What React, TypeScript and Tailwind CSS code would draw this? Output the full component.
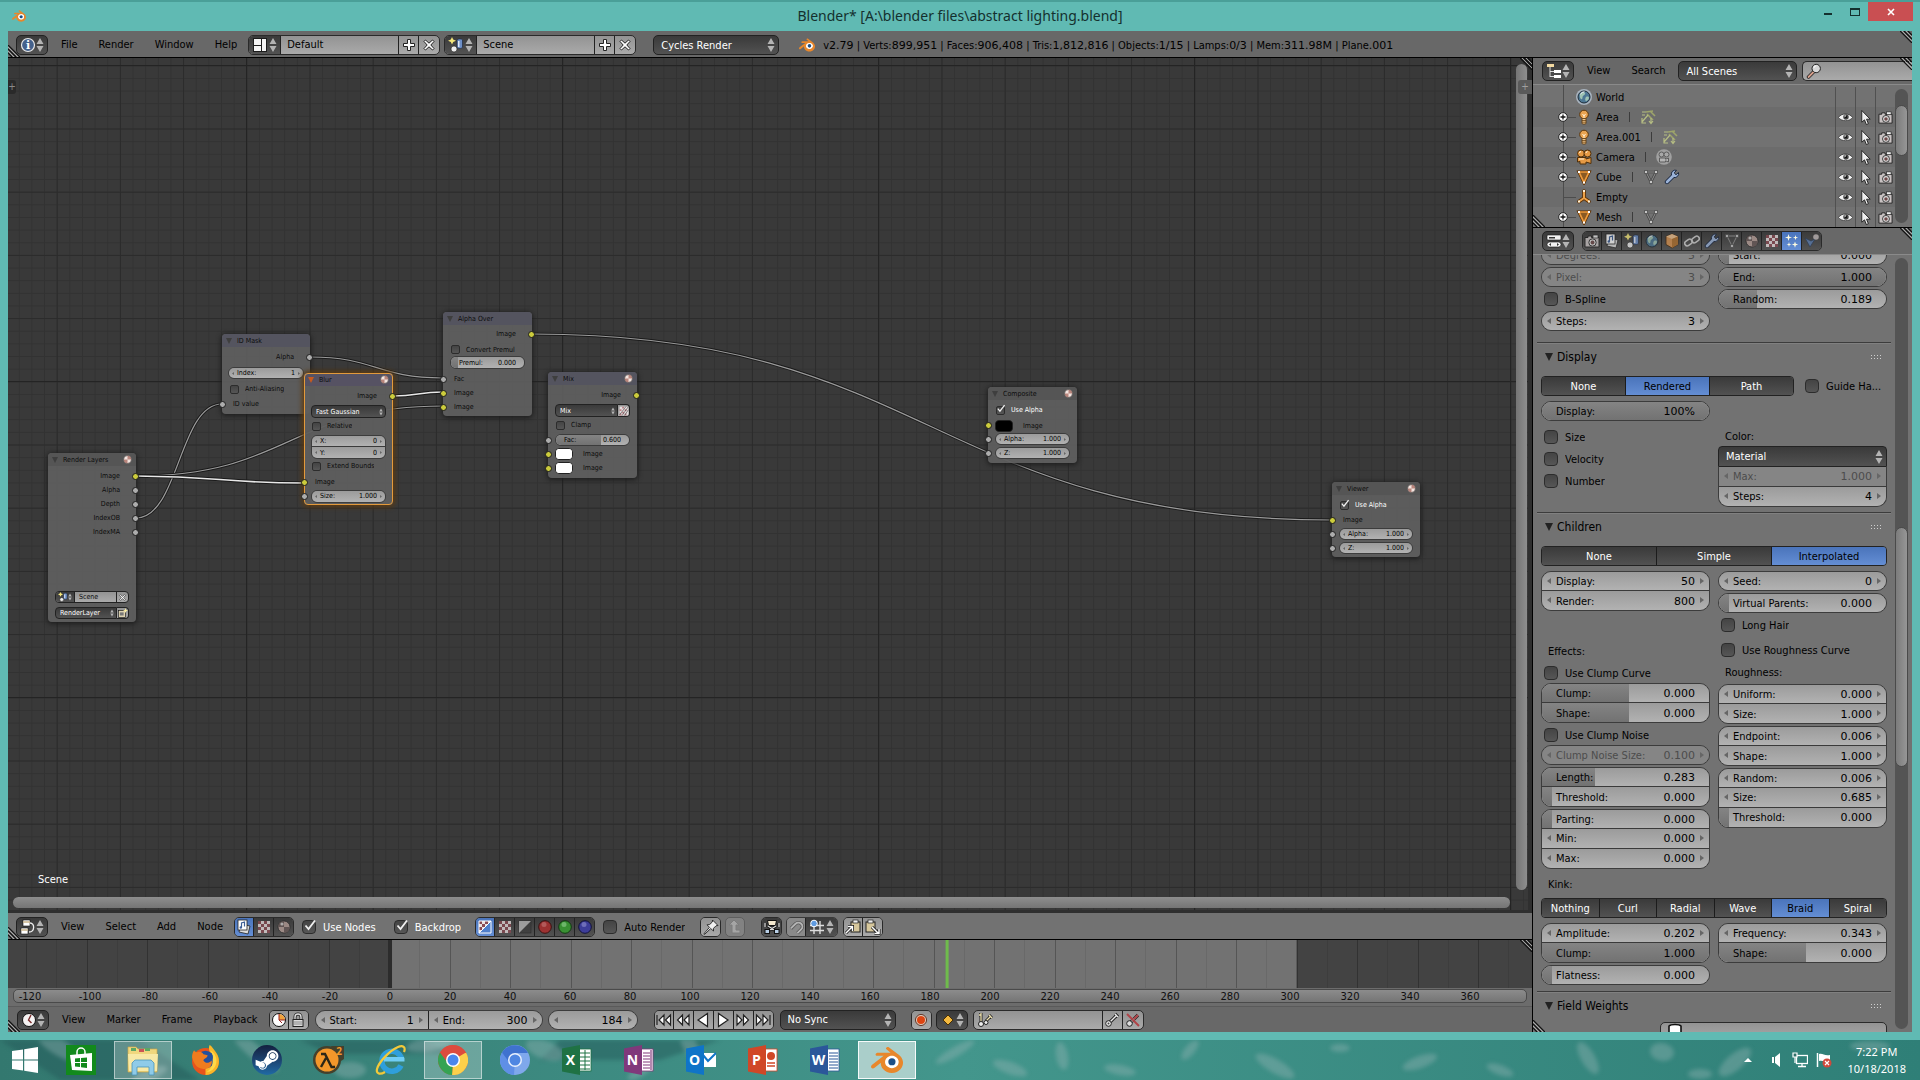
import type { ReactNode } from 'react';
import { SiBlender } from 'react-icons/si';
import { FaSteamSymbol } from 'react-icons/fa';

/* ---------- icons ---------- */

const CHECKER = (
  <>
    <rect x="2" y="2" width="12" height="12" fill="#e8e0e0" />
    <path
      d="M2 2h3v3H2zM8 2h3v3H8zM5 5h3v3H5zM11 5h3v3h-3zM2 8h3v3H2zM8 8h3v3H8zM5 11h3v3H5zM11 11h3v3h-3z"
      fill="#8b4a52"
    />
  </>
);

const ICONS: Record<string, ReactNode> = {
  info: (
    <>
      <circle cx="8" cy="8" r="6.5" fill="#44618c" stroke="#e8e8e8" strokeWidth="1.2" />
      <text x="8" y="12" fontSize="11" fontWeight="bold" textAnchor="middle" fill="#fff" fontFamily="DejaVu Serif, serif">
        i
      </text>
    </>
  ),
  layout: (
    <>
      <rect x="1" y="1" width="14" height="14" fill="#1c1c1c" />
      <path d="M2 2h7v6H2zM2 9h7v5H2zM10 2h4v12h-4z" fill="#f4f4f4" />
    </>
  ),
  scene: (
    <>
      <circle cx="6" cy="12" r="3" fill="#eee" stroke="#222" strokeWidth=".6" />
      <path d="M9 3c0-1.5 5.5-1.5 5.5 0v7c0 2-5.5 2-5.5 0z" fill="#6d8fc7" stroke="#1f2a3d" strokeWidth=".7" />
      <path d="M10 4h1.500v6H10z" fill="#dfe8f8" />
      <path d="M4 0l1.200 2.500L8 3.700 5.200 5 4 7.600 2.800 5 0 3.700l2.800-1.200z" fill="#f5e77a" />
    </>
  ),
  outliner: (
    <>
      <path d="M4 4v10M4 8.500h4M4 13.500h4" stroke="#ddd" fill="none" />
      <rect x="1" y="1" width="7" height="3" fill="#f2d9a0" />
      <path d="M8 7h7v3H8zM8 12h7v3H8z" fill="#fff" />
    </>
  ),
  props: (
    <>
      <rect x="1" y="2" width="14" height="5" rx="1" fill="#f2f2f2" stroke="#111" strokeWidth=".6" />
      <rect x="3" y="4" width="6" height="1.500" fill="#333" />
      <rect x="1" y="9" width="14" height="5" rx="2.500" fill="#f2f2f2" stroke="#111" strokeWidth=".6" />
      <path d="M5 10l-2 1.500L5 13zM11 10l2 1.500L11 13z" fill="#333" />
    </>
  ),
  nodes: (
    <>
      <rect x="3" y="1" width="7" height="6" fill="#fff" stroke="#111" strokeWidth=".6" />
      <rect x="1" y="9" width="7" height="6" fill="#fff" stroke="#111" strokeWidth=".6" />
      <path d="M3 3h7M1 11h7" stroke="#c9b48a" strokeWidth="1.500" />
      <path d="M10 4c5 0 5 9-1 9" stroke="#eee" fill="none" strokeWidth="1.300" />
    </>
  ),
  clock: (
    <>
      <circle cx="8" cy="8" r="6.500" fill="#f5f2f2" stroke="#111" />
      <path d="M10 3L7.500 8l3 3" stroke="#7a2c2c" fill="none" strokeWidth="1.400" />
    </>
  ),
  clockPie: (
    <>
      <circle cx="8" cy="8" r="6.500" fill="#fff" stroke="#111" />
      <path d="M8 8V2a6 6 0 0 1 6 6z" fill="#f0a23c" />
      <path d="M8 2v6h6M8 8l3 3" stroke="#992222" fill="none" />
    </>
  ),
  lock: (
    <>
      <path d="M5 8V5a3 3 0 0 1 6 0v3" stroke="#222" strokeWidth="3" fill="none" />
      <path d="M5 8V5a3 3 0 0 1 6 0v3" stroke="#ddd" strokeWidth="1.400" fill="none" />
      <rect x="3" y="7.500" width="10" height="7" fill="#ddd" stroke="#222" />
      <path d="M4 10h8M4 12h8" stroke="#888" />
    </>
  ),
  plus: <path d="M6.500 2.500h3v4h4v3h-4v4h-3v-4h-4v-3h4z" fill="#fff" stroke="#222" />,
  cross: (
    <path d="M3 4.500L4.500 3 8 6.200 11.500 3 13 4.500 9.800 8 13 11.500 11.500 13 8 9.800 4.500 13 3 11.500 6.200 8z" fill="#fff" stroke="#222" />
  ),
  search: (
    <>
      <path d="M7.500 9L2.500 14" stroke="#222" strokeWidth="3.400" strokeLinecap="round" />
      <path d="M7.500 9L2.500 14" stroke="#d7a08c" strokeWidth="1.800" strokeLinecap="round" />
      <circle cx="10.200" cy="5.500" r="4.200" fill="#d8d8d8" stroke="#222" />
      <path d="M7.800 5a2.500 2.500 0 0 1 2.500-2.200" stroke="#fff" fill="none" />
    </>
  ),
  world: (
    <>
      <circle cx="8" cy="8" r="6" fill="#4d7794" stroke="#1c2c38" />
      <path d="M4 5c2-2 4-2 5-1s-1 2-2 3 0 2-1 3-3-2-2-5zM10 8c2-1 3 0 3 1s-2 3-3 3-1-3 0-4z" fill="#9fc4b4" />
      <path d="M4.500 5a5 5 0 0 1 4-2.200" stroke="#fff" fill="none" />
    </>
  ),
  lamp: (
    <>
      <circle cx="8" cy="5.500" r="4.300" fill="#e9a452" stroke="#5c3508" />
      <path d="M6.500 5l1.500 2 1.500-2M8 7v3" stroke="#fff3da" fill="none" />
      <rect x="6" y="9.500" width="4" height="5.500" rx="1" fill="#f0c78c" stroke="#5c3508" strokeWidth=".8" />
      <path d="M6 11.500h4M6 13.200h4" stroke="#5c3508" strokeWidth=".7" />
    </>
  ),
  lampData: (
    <>
      <path d="M7 5l6 6M10 2l5 5M6 3l7-1" stroke="#9ea56a" strokeWidth="1.600" fill="none" />
      <path d="M8 6l-6 7M2 9v5h4M11 9v5M9 12l2 2.500 2-2.500M2 3h4M2 6h3" stroke="#b6bd83" fill="none" strokeWidth="1.200" />
    </>
  ),
  camera: (
    <>
      <circle cx="5" cy="4.500" r="3.500" fill="#e69a45" stroke="#51300a" />
      <circle cx="11.500" cy="4.500" r="3.500" fill="#e69a45" stroke="#51300a" />
      <path d="M1.500 8.500h8.500v1.500l5-1.500v6L10 13v2H4v-2.500L1.500 13z" fill="#e69a45" stroke="#51300a" />
      <path d="M3.500 4A1.500 1.500 0 0 1 5 2.500M10 4a1.500 1.500 0 0 1 1.500-1.500M3 10h5" stroke="#fff3da" fill="none" />
    </>
  ),
  cameraData: (
    <>
      <circle cx="8" cy="8" r="7.800" fill="#a0a0a0" />
      <circle cx="5.500" cy="5.500" r="2.500" fill="#a8a8a8" stroke="#5c5c5c" />
      <circle cx="10.500" cy="5.500" r="2.500" fill="#a8a8a8" stroke="#5c5c5c" />
      <path d="M3.500 9h6v1.200l3-1.200v4l-3-1.200V13h-6z" fill="#b4b4b4" stroke="#5c5c5c" />
    </>
  ),
  mesh: (
    <>
      <path d="M3 3h10L8 13.500z" fill="none" stroke="#5c2f00" strokeWidth="3.200" />
      <path d="M3 3h10L8 13.500z" fill="#8a5a24" stroke="#ee9b3c" strokeWidth="1.700" />
      <path d="M2 2h2v2H2zM12 2h2v2h-2zM7 12.500h2v2H7z" fill="#fff" />
    </>
  ),
  meshData: (
    <>
      <path d="M3 3h10L8 13z" fill="none" stroke="#484848" strokeWidth="2.600" />
      <path d="M3 3h10L8 13z" fill="none" stroke="#909090" />
      <path d="M1.500 1.500h3v3h-3zM11.500 1.500h3v3h-3zM6.500 11.500h3v3h-3z" fill="#c5c5c5" stroke="#444" strokeWidth=".7" />
    </>
  ),
  empty: (
    <>
      <path d="M8 2v7L3 12.500M8 9l5 3.500" fill="none" stroke="#5c2f00" strokeWidth="3.600" strokeLinecap="round" />
      <path d="M8 2v7L3 12.500M8 9l5 3.500" fill="none" stroke="#eda24a" strokeWidth="2" strokeLinecap="round" />
      <path d="M7 1h2v2H7zM2 11.500h2v2H2zM12 11.500h2v2h-2z" fill="#fff2d8" />
    </>
  ),
  wrench: (
    <>
      <path d="M3 13l6-6" stroke="#1a2740" strokeWidth="4.400" strokeLinecap="round" />
      <path d="M14.500 3.500l-2.500 2.200-1.800-1.800L12.500 1.300a4 4 0 0 0-5 5l2.200 2.200a4 4 0 0 0 4.800-5z" fill="#9bb3d8" stroke="#1a2740" />
      <path d="M3 13l6.500-6.500" stroke="#9bb3d8" strokeWidth="2.600" strokeLinecap="round" />
    </>
  ),
  eye: (
    <>
      <path d="M.5 8c3-5 12-5 15 0-3 4.500-12 4.500-15 0z" fill="#f2f2f2" stroke="#333" strokeWidth=".8" />
      <circle cx="8.500" cy="7.500" r="2.900" fill="#444" />
      <circle cx="8.500" cy="7.500" r="1.200" fill="#111" />
      <circle cx="7.600" cy="6.500" r=".8" fill="#fff" />
    </>
  ),
  cursor: <path d="M4 .5v12.500l2.900-2.500 2 5 2.200-.9-2-4.800H13z" fill="#eee" stroke="#222" />,
  still: (
    <>
      <path d="M1 4.500h3V3h3.500v1.500H15V14H1z" fill="#c9c3c3" stroke="#222" />
      <rect x="9" y="2" width="5" height="3" fill="#eee" stroke="#222" strokeWidth=".7" />
      <circle cx="8.500" cy="9.500" r="3.700" fill="#ddd" stroke="#333" />
      <circle cx="8.500" cy="9.500" r="1.900" fill="#6e4a4a" />
    </>
  ),
  layers: (
    <>
      <path d="M5 5l9 2-2 8-9-2z" fill="#ddd" stroke="#222" strokeWidth=".8" />
      <rect x="2" y="1" width="9" height="10" fill="#fff" stroke="#222" strokeWidth=".8" />
      <path d="M5.500 8.500V4l3-1v4.500" stroke="#3c5e95" fill="none" strokeWidth="1.200" />
      <circle cx="4.800" cy="8.500" r="1.200" fill="#3c5e95" />
    </>
  ),
  cube: (
    <>
      <path d="M8 1l6 2.500v8L8 15l-6-3.500v-8z" fill="#d99350" stroke="#3a2208" strokeWidth=".8" />
      <path d="M8 1l6 2.500L8 6 2 3.500z" fill="#f3c491" />
      <path d="M8 6v9l6-3.500v-8z" fill="#b0702d" />
    </>
  ),
  chain: (
    <g fill="none" stroke="#d0d0d0" strokeWidth="1.600">
      <rect x="0.500" y="7" width="8" height="5" rx="2.500" transform="rotate(-35 4.500 9.500)" />
      <rect x="7.500" y="4" width="8" height="5" rx="2.500" transform="rotate(-35 11.500 6.500)" />
    </g>
  ),
  material: (
    <>
      <circle cx="8" cy="8" r="6" fill="#b8a09a" stroke="#222" strokeWidth=".8" />
      <path d="M8 8V2a6 6 0 0 0-6 6zM8 8v6a6 6 0 0 0 6-6z" fill="#6a5a58" />
      <circle cx="6" cy="5" r="1.600" fill="#fff" opacity=".7" />
    </>
  ),
  texture: CHECKER,
  particles: (
    <path
      d="M4.500 1l.8 2.700 2.700.8-2.700.8L4.500 8l-.8-2.700L1 4.500l2.700-.8zM11.500 2l.6 2 2 .6-2 .6-.6 2-.6-2-2-.6 2-.6zM5 9l.6 1.900 1.900.6-1.900.6L5 14l-.6-1.900-1.900-.6 1.900-.6zM11 8.500l.8 2.300 2.400.7-2.400.8-.8 2.400-.8-2.400-2.400-.8 2.400-.7z"
      fill="#fdfbe0"
    />
  ),
  physics: (
    <>
      <path d="M1 5l5 9 5-8-4 2z" fill="#5b7cae" stroke="#263a58" strokeWidth=".7" />
      <circle cx="12" cy="4" r="2.800" fill="#c0b8b8" />
    </>
  ),
  colorAlpha: (
    <>
      {CHECKER}
      <path d="M14 2v12H2z" fill="#4f7fcc" />
      <path d="M2 2h12v12H2zM2 14L14 2" fill="none" stroke="#fff" />
    </>
  ),
  alpha: (
    <>
      <rect x="2" y="2" width="12" height="12" fill="#3c3c3c" stroke="#222" strokeWidth=".6" />
      <path d="M2 2h12L2 14z" fill="#bbb" />
    </>
  ),
  red: (
    <>
      <circle cx="8" cy="8" r="6.300" fill="#b82a2a" stroke="#300" />
      <circle cx="7" cy="5.500" r="2.500" fill="#e88" opacity=".6" />
    </>
  ),
  green: (
    <>
      <circle cx="8" cy="8" r="6.300" fill="#35a82c" stroke="#030" />
      <circle cx="7" cy="5.500" r="2.500" fill="#afa" opacity=".6" />
    </>
  ),
  blue: (
    <>
      <circle cx="8" cy="8" r="6.300" fill="#3a3ab4" stroke="#003" />
      <circle cx="7" cy="5.500" r="2.500" fill="#aaf" opacity=".6" />
    </>
  ),
  pin: (
    <path d="M9.500 1l5.500 5.500-2 .3-2.500 2.500v2.700L7.700 9.500 2 15l-1 .3.300-1L6.500 8.300 4 5.800l2.700-.3L9.300 3z" fill="#f0f0f0" stroke="#222" strokeWidth=".9" />
  ),
  up: <path d="M7 1l5 5H9v5h4v3H5V6H2z" fill="#a5a5a5" stroke="#7c7c7c" />,
  backdrop: (
    <>
      <path d="M3.500 1.500h9l-1 5h-7z" fill="#f3e8cf" stroke="#111" />
      <path d="M1 4v4M15 4v4M4 7l8 5M12 7l-8 5" stroke="#111" strokeWidth="3" />
      <path d="M1 4v4M15 4v4M4 7l8 5M12 7l-8 5" stroke="#ddd" strokeWidth="1.300" />
      <rect x="1" y="10.500" width="4.500" height="4" fill="#b9d0e8" stroke="#111" />
      <rect x="10.500" y="10.500" width="4.500" height="4" fill="#b9d0e8" stroke="#111" />
    </>
  ),
  magnet: (
    <>
      <path d="M2 9l5-5a4 4 0 0 1 6 6l-4 4" stroke="#555" strokeWidth="3.600" fill="none" />
      <path d="M2 9l5-5a4 4 0 0 1 6 6l-4 4" stroke="#b4b4b4" strokeWidth="2" fill="none" />
    </>
  ),
  grid: (
    <>
      <path d="M5 6v9M11 2v13M1 6.500h14M1 11.500h14" stroke="#ddd" strokeWidth="1.400" />
      <circle cx="5" cy="4.500" r="3.300" fill="#5f9be0" stroke="#fff" />
    </>
  ),
  copy: (
    <>
      <rect x="6" y="3" width="9" height="10" fill="#d6c79c" stroke="#222" />
      <rect x="8" y="1" width="5" height="3" fill="#eee" stroke="#222" strokeWidth=".7" />
      <path d="M1 14l6-6M3 7.500h4.500V12" stroke="#111" strokeWidth="3" fill="none" />
      <path d="M1 14l6-6M3 7.500h4.500V12" stroke="#fff" strokeWidth="1.500" fill="none" />
    </>
  ),
  paste: (
    <>
      <rect x="1" y="3" width="9" height="10" fill="#d6c79c" stroke="#222" />
      <rect x="3" y="1" width="5" height="3" fill="#eee" stroke="#222" strokeWidth=".7" />
      <path d="M7 8l6.500 6.500M14 10v4.500H9.500" stroke="#111" strokeWidth="3" fill="none" />
      <path d="M7 8l6.500 6.500M14 10v4.500H9.500" stroke="#fff" strokeWidth="1.500" fill="none" />
    </>
  ),
  first: <path d="M1 3v10M8 3L3 8l5 5zM14.500 3l-5 5 5 5z" fill="#fff" stroke="#222" strokeWidth="1.200" />,
  prev: <path d="M7.500 3l-5 5 5 5zM14 3L9 8l5 5z" fill="#fff" stroke="#222" strokeWidth="1.200" />,
  back: <path d="M12.500 1.500v13L3 8z" fill="#fff" stroke="#222" strokeWidth="1.200" />,
  play: <path d="M3.500 1.500v13L13 8z" fill="#fff" stroke="#222" strokeWidth="1.200" />,
  next: <path d="M2 3l5 5-5 5zM8.500 3l5 5-5 5z" fill="#fff" stroke="#222" strokeWidth="1.200" />,
  last: <path d="M15 3v10M1.500 3l5 5-5 5zM8 3l5 5-5 5z" fill="#fff" stroke="#222" strokeWidth="1.200" />,
  record: (
    <>
      <circle cx="8" cy="8" r="5.500" fill="#e9d5c5" stroke="#5e3020" />
      <circle cx="8" cy="8" r="4" fill="#dd4411" />
    </>
  ),
  diamond: <path d="M8 3l5 5-5 5-5-5z" fill="#f3b93f" stroke="#4a2f00" />,
  keying: (
    <>
      <path d="M4 1v9M2 3h2M9 9l5-5M12 3l3 3" stroke="#222" strokeWidth="3" />
      <path d="M4 1v9M2 3h2M9 9l5-5M12 3l3 3" stroke="#f0e3b0" strokeWidth="1.300" />
      <circle cx="4" cy="12" r="2.500" fill="#eee" stroke="#222" />
      <circle cx="9" cy="10.500" r="2" fill="#eee" stroke="#222" />
    </>
  ),
  key: (
    <>
      <path d="M5 11l8-8M11 2l3 3" stroke="#222" strokeWidth="3.200" />
      <path d="M5 11l8-8M11 2l3 3" stroke="#eee" strokeWidth="1.400" />
      <circle cx="4.500" cy="11.500" r="2.800" fill="#eee" stroke="#222" />
      <circle cx="4.500" cy="11.500" r="1" fill="#444" />
    </>
  ),
  keyDel: (
    <>
      <path d="M5 11l8-8" stroke="#222" strokeWidth="3.200" />
      <path d="M5 11l8-8" stroke="#ddd" strokeWidth="1.400" />
      <circle cx="4.500" cy="11.500" r="2.800" fill="#ddd" stroke="#222" />
      <path d="M2 2l12 12M13 3L9 7" stroke="#b04448" strokeWidth="2" />
    </>
  ),
  newLayer: (
    <>
      <rect x="1" y="4" width="11" height="11" fill="#ddd2b0" stroke="#111" />
      <path d="M3 7h6v5H3z" fill="#777" />
      <path d="M12 0l1 3 3 1-3 1-1 3-1-3-3-1 3-1z" fill="#fff3a0" />
    </>
  ),
  useAlpha: (
    <>
      <rect x="1" y="1" width="14" height="14" fill="#e6dede" />
      <path d="M1 5h3v3H1zM5 1h3v3H5zM9 5h3v3H9zM5 9h3v3H5zM9 12h3v3H9zM1 12h3v3H1z" fill="#b98288" />
      <path d="M15 1L5 15M15 6L9 15M11 1L1 14" stroke="#444" />
    </>
  ),
  ball: (
    <>
      <circle cx="8" cy="8" r="7" fill="#f3e4df" stroke="#333" />
      <path d="M8 8V1.500A6.500 6.500 0 0 1 14.500 8zM8 8v6.500A6.500 6.500 0 0 1 1.500 8z" fill="#a5675c" opacity=".75" />
    </>
  ),
  box: <path d="M2 3c2-2 10-2 12 0v12H2z" fill="#fff" stroke="#111" strokeWidth="1.600" />,
};

function Icon({ name, className = 'size-4' }: { name: string; className?: string }) {
  return (
    <svg viewBox="0 0 16 16" className={`${className} shrink-0`} aria-hidden="true">
      {ICONS[name]}
    </svg>
  );
}

function BlenderLogo({ className }: { className: string }) {
  return (
    <span className={`relative inline-block shrink-0 ${className}`}>
      <svg viewBox="0 0 24 24" className="absolute inset-0 size-full" aria-hidden="true">
        <circle cx="15.600" cy="13.300" r="5.500" fill="#fff" />
      </svg>
      <SiBlender className="absolute inset-0 size-full text-[#e8872b]" />
      <svg viewBox="0 0 24 24" className="absolute inset-0 size-full" aria-hidden="true">
        <ellipse cx="15.700" cy="13.300" rx="4.600" ry="4.100" fill="#fff" />
        <circle cx="15.700" cy="13.300" r="2.700" fill="#1d4f86" />
      </svg>
    </span>
  );
}

function UpDown({ small = false }: { small?: boolean }) {
  return (
    <svg viewBox="0 0 8 14" className={small ? 'h-2 w-1 shrink-0' : 'h-3.5 w-2 shrink-0'} aria-hidden="true">
      <path d="M4 0l3.500 6h-7zM4 14l3.500-6h-7z" fill="#b4b4b4" />
    </svg>
  );
}

/* Diagonal grip in the corner of every editor */
function Grip({ className }: { className: string }) {
  return (
    <svg viewBox="0 0 12 12" className={`pointer-events-none absolute size-3 ${className}`} aria-hidden="true">
      <path d="M0 0l12 12M4 0l8 8M8 0l4 4" stroke="#111" strokeWidth="1.200" />
      <path d="M2 0l10 10M6 0l6 6" stroke="#bbb" strokeWidth=".8" />
    </svg>
  );
}

function GripLow() {
  return (
    <svg viewBox="0 0 12 12" className="pointer-events-none absolute bottom-0 left-0 size-3" aria-hidden="true">
      <path d="M0 0l12 12M0 4l8 8M0 8l4 4" stroke="#111" strokeWidth="1.200" />
      <path d="M0 2l10 10M0 6l6 6" stroke="#bbb" strokeWidth=".8" />
    </svg>
  );
}

/* ---------- shared controls ---------- */

const DARK = 'bg-linear-to-b from-[#3a3a3a] to-[#525252]';
const LIGHT = 'bg-linear-to-b from-[#939393] to-[#aaaaaa]';
const CONDENSED = "font-['DejaVu_Sans_Condensed','DejaVu_Sans',sans-serif]";
const WIDE = "font-['DejaVu_Sans',sans-serif]";

function EditorType({ icon, label }: { icon: string; label: string }) {
  return (
    <button
      type="button"
      aria-label={label}
      className={`flex h-5 w-8 items-center justify-between rounded-[5px] border border-[#222] px-[3px] ${DARK}`}
    >
      <Icon name={icon} />
      <UpDown />
    </button>
  );
}

function Menus({ items }: { items: string[] }) {
  return (
    <nav className="flex gap-px pr-px pl-[3px]">
      {items.map((item) => (
        <button key={item} type="button" className="px-[10px]">
          {item}
        </button>
      ))}
    </nav>
  );
}

function IdBlock({ icon, value, label }: { icon: string; value: string; label: string }) {
  return (
    <div className={`flex h-5 w-48 divide-x divide-[#222] overflow-hidden rounded-[5px] border border-[#2a2a2a] ${LIGHT}`}>
      <button type="button" aria-label={`Browse ${label}`} className={`flex w-8 items-center justify-between px-[3px] ${DARK}`}>
        <Icon name={icon} />
        <UpDown />
      </button>
      <input aria-label={label} defaultValue={value} className="w-0 flex-1 px-[6px] outline-none" />
      <button type="button" aria-label={`Add ${label}`} className="flex w-5 items-center justify-center">
        <Icon name="plus" />
      </button>
      <button type="button" aria-label={`Delete ${label}`} className="flex w-5 items-center justify-center">
        <Icon name="cross" />
      </button>
    </div>
  );
}

function Dropdown({ label, value, className, small = false }: { label: string; value: string; className: string; small?: boolean }) {
  return (
    <div className={`relative flex items-center border border-[#222] text-white ${DARK} ${className}`}>
      <select aria-label={label} className={`size-full appearance-none outline-none ${small ? 'pl-[4px]' : 'pt-px pl-[7px]'}`}>
        <option>{value}</option>
      </select>
      <span className={`pointer-events-none absolute ${small ? 'right-[2px]' : 'right-[3px]'}`}>
        <UpDown small={small} />
      </span>
    </div>
  );
}

function Check({ label, checked = false, small = false, light = false }: { label: string; checked?: boolean; small?: boolean; light?: boolean }) {
  return (
    <label className={`relative flex min-w-0 items-center ${small ? 'gap-[6px] pl-px' : 'h-5 gap-[7px] pl-[3px]'} ${light ? 'text-white' : ''}`}>
      <input
        type="checkbox"
        defaultChecked={checked}
        className={`peer shrink-0 appearance-none border border-[#2c2c2c] bg-linear-to-b from-[#444] to-[#565656] ${
          small ? 'size-[9px] rounded-[2px]' : 'size-[14px] rounded-[4px]'
        }`}
      />
      <svg
        viewBox="0 0 14 14"
        className={`pointer-events-none absolute hidden -translate-y-px peer-checked:block ${small ? 'left-[1px] size-[10px]' : 'left-[4px] size-[14px]'}`}
        aria-hidden="true"
      >
        <path d="M2.500 6.500l3 3.500L12 1.500" fill="none" stroke="#f0f0f0" strokeWidth="1.800" />
      </svg>
      <span className={`truncate ${small ? '' : 'pt-px'}`}>{label}</span>
    </label>
  );
}

type FieldProps = {
  label?: string;
  value: string;
  fill?: number;
  dim?: boolean;
  small?: boolean;
};

/* A number button; with `fill` it is drawn as a slider */
function Field({ label = '', value, fill, dim = false, small = false }: FieldProps) {
  const slider = fill !== undefined;
  return (
    <label
      className={`relative flex min-h-0 w-full items-center overflow-hidden ${small ? 'px-[8px]' : 'px-[14px] pt-[2px]'} ${
        dim ? 'bg-[#858585] text-[#4c4c4c]' : 'bg-linear-to-b from-[#9b9b9b] to-[#b2b2b2] text-black'
      }`}
    >
      {slider && (
        <span className="absolute inset-y-0 left-0 bg-linear-to-b from-[#848484] to-[#727272]" style={{ width: `${fill * 100}%` }} />
      )}
      {!slider && (
        <>
          <svg viewBox="0 0 4 6" className={`absolute ${small ? 'left-[3px] h-[3px] w-[2px]' : 'top-[6px] left-[5px] h-1.5 w-1'}`} aria-hidden="true">
            <path d="M4 0v6L0 3z" fill="#666" />
          </svg>
          <svg viewBox="0 0 4 6" className={`absolute ${small ? 'right-[3px] h-[3px] w-[2px]' : 'top-[6px] right-[5px] h-1.5 w-1'}`} aria-hidden="true">
            <path d="M0 0v6l4-3z" fill="#666" />
          </svg>
        </>
      )}
      <span className="relative whitespace-nowrap">{label}</span>
      <input
        aria-label={label || 'Current frame'}
        defaultValue={value}
        disabled={dim}
        className={`relative w-0 flex-1 text-right outline-none ${small ? '' : WIDE}`}
      />
    </label>
  );
}

function FieldGroup({ rows, className }: { rows: FieldProps[]; className: string }) {
  return (
    <div className={`grid auto-rows-fr divide-y divide-[#3a3a3a] overflow-hidden border border-[#3c3c3c] ${className}`}>
      {rows.map((row, i) => (
        <Field key={i} {...row} />
      ))}
    </div>
  );
}

function Choice({ items, active, className }: { items: string[]; active: string; className: string }) {
  return (
    <div className={`flex h-5 divide-x divide-[#1c1c1c] overflow-hidden rounded-[4px] border border-[#222] ${className}`}>
      {items.map((item) => (
        <button
          key={item}
          type="button"
          aria-pressed={item === active}
          className={`w-0 flex-1 pt-[2px] ${item === active ? 'bg-linear-to-b from-[#4a74bb] to-[#648ed4] text-black' : `text-white ${DARK}`}`}
        >
          {item}
        </button>
      ))}
    </div>
  );
}

function IconGroup({ icons, active, tone = 'dark' }: { icons: string[]; active?: string; tone?: 'dark' | 'light' }) {
  return (
    <div className="flex h-5 shrink-0 divide-x divide-[#222] overflow-hidden rounded-[5px] border border-[#2a2a2a]">
      {icons.map((icon) => (
        <button
          key={icon}
          type="button"
          aria-label={icon}
          className={`flex w-5 items-center justify-center first:w-[19px] last:w-[19px] ${
            icon === active ? 'bg-linear-to-b from-[#4a74bb] to-[#648ed4]' : tone === 'dark' ? DARK : LIGHT
          }`}
        >
          <Icon name={icon} className={active && icon !== active ? 'size-4 opacity-75' : 'size-4'} />
        </button>
      ))}
    </div>
  );
}

/* ---------- top ---------- */

function TitleBar() {
  return (
    <header className="grid h-[31px] grid-cols-[1fr_auto_1fr] border-t-2 border-[#4a9f98]">
      <div className="flex items-center pb-px pl-3">
        <BlenderLogo className="size-3.5" />
      </div>
      <h1 className="font-['Noto_Sans','Open_Sans',sans-serif] text-[14px] leading-[27px] text-[#14302e]">
        Blender* [A:\blender files\abstract lighting.blend]
      </h1>
      <div className="flex justify-end pr-[7px]">
        <button type="button" aria-label="Minimize" className="flex h-[19px] w-[27px] items-center justify-center">
          <span className="mt-1 h-[2px] w-2 bg-[#14302e]" />
        </button>
        <button type="button" aria-label="Maximize" className="flex h-[19px] w-[27px] items-center justify-center">
          <span className="h-2 w-2.5 border border-t-2 border-[#14302e]" />
        </button>
        <button type="button" aria-label="Close" className="flex h-[19px] w-[45px] items-center justify-center bg-[#c94f52]">
          <svg viewBox="0 0 8 8" className="size-2" aria-hidden="true">
            <path d="M1 1l6 6M7 1L1 7" stroke="#fff" strokeWidth="1.600" />
          </svg>
        </button>
      </div>
    </header>
  );
}

const STATS = [
  ['v', '2.79'],
  ['Verts:', '899,951'],
  ['Faces:', '906,408'],
  ['Tris:', '1,812,816'],
  ['Objects:', '1/15'],
  ['Lamps:', '0/3'],
  ['Mem:', '311.98M'],
  ['Plane', '.001'],
];

function InfoHeader() {
  return (
    <div className="relative flex h-[27px] items-center border-b border-black bg-[#686868] pt-[2px] pl-2">
      <EditorType icon="info" label="Editor type: Info" />
      <Menus items={['File', 'Render', 'Window', 'Help']} />
      <IdBlock icon="layout" value="Default" label="screen layout" />
      <div className="ml-1">
        <IdBlock icon="scene" value="Scene" label="scene" />
      </div>
      <Dropdown label="Render engine" value="Cycles Render" className="ml-[17px] h-5 w-[126px] rounded-[5px]" />
      <BlenderLogo className="ml-5 size-4" />
      <p className="ml-[8px] pt-px whitespace-nowrap">
        {STATS.map(([name, value], i) => (
          <span key={name}>
            {i > 0 && ' | '}
            {name}
            <span className={WIDE}>{value}</span>
          </span>
        ))}
      </p>
      <Grip className="top-0 right-0" />
      <GripLow />
    </div>
  );
}

/* ---------- node editor ---------- */

type SocketColor = 'yellow' | 'grey';

function Row({
  children,
  left,
  right,
  className = 'h-[14px]',
}: {
  children: ReactNode;
  left?: SocketColor;
  right?: SocketColor;
  className?: string;
}) {
  const dot = 'absolute size-[7px] rounded-full border border-[#1c1c1c]';
  return (
    <div className={`relative flex shrink-0 items-center px-[7px] ${className}`}>
      {left && <span className={`${dot} -left-[3px] ${left === 'yellow' ? 'bg-[#cccc3c]' : 'bg-[#adadad]'}`} />}
      {children}
      {right && <span className={`${dot} -right-[3px] ${right === 'yellow' ? 'bg-[#cccc3c]' : 'bg-[#adadad]'}`} />}
    </div>
  );
}

function Node({
  title,
  className,
  header = 'bg-[#555]',
  selected = false,
  preview = true,
  children,
}: {
  title: string;
  className: string;
  header?: string;
  selected?: boolean;
  preview?: boolean;
  children: ReactNode;
}) {
  return (
    <section
      className={`absolute flex flex-col rounded-[4px] bg-[#5e5e5e]/95 text-[7px] leading-[10px] text-[#0c0c0c] ${
        selected ? 'shadow-[0_0_5px_2px_#5c3a10] outline -outline-offset-1 outline-[#e39a3c]' : 'shadow-[0_1px_5px_1px_#1e1e1e]'
      } ${className}`}
    >
      <h2 className={`flex h-[13px] shrink-0 items-center gap-[5px] rounded-t-[4px] px-[4px] ${header}`}>
        <svg viewBox="0 0 6 6" className="size-[6px]" aria-hidden="true">
          <path d="M0 0h6L3 6z" fill={selected ? '#c85a1e' : '#3e3e3e'} />
        </svg>
        <span className="flex-1 whitespace-nowrap">{title}</span>
        {preview && <Icon name="ball" className="size-[9px]" />}
      </h2>
      {children}
    </section>
  );
}

function Output({ label, color = 'grey', className }: { label: string; color?: SocketColor; className?: string }) {
  return (
    <Row right={color} className={className}>
      <span className="flex-1 pr-[9px] text-right">{label}</span>
    </Row>
  );
}

function Input({ label, color = 'grey', className }: { label: string; color?: SocketColor; className?: string }) {
  return (
    <Row left={color} className={className}>
      <span className="pl-[4px]">{label}</span>
    </Row>
  );
}

function Swatch({ label, black = false, className }: { label: string; black?: boolean; className?: string }) {
  return (
    <Row left="yellow" className={className}>
      <input
        type="color"
        aria-label={`${label} color`}
        defaultValue={black ? '#000000' : '#ffffff'}
        className={`h-[12px] w-[18px] appearance-none rounded-[4px] border border-[#222] p-0 ${black ? 'bg-black' : 'bg-white'} [&::-webkit-color-swatch-wrapper]:p-0 [&::-webkit-color-swatch]:rounded-[3px] [&::-webkit-color-swatch]:border-0`}
      />
      <span className="pl-[10px]">{label}</span>
    </Row>
  );
}

function NodeCanvas() {
  const links = [
    'M128 460C171 460 171 346 214 346',
    'M128 418C282 418 282 348 435 348',
    'M302 299C368 299 368 320 435 320',
    'M524 276C924 276 924 462 1324 462',
  ];
  const activeLinks = ['M128 418C212 418 212 425 296 425', 'M385 338C410 338 410 334 435 334'];

  return (
    <div className="relative min-h-0 flex-1 overflow-hidden bg-[#393939]">
      <svg className="absolute inset-0 size-full" aria-hidden="true">
        <defs>
          <pattern id="minor" width="12.640" height="12.640" x="238.300" y="7.300" patternUnits="userSpaceOnUse">
            <path d="M0 .5h12.640M.5 0v12.640" stroke="#323232" />
          </pattern>
          <pattern id="mid" width="63.200" height="63.200" x="238.300" y="7.300" patternUnits="userSpaceOnUse">
            <path d="M0 .5h63.200M.5 0v63.200" stroke="#2b2b2b" />
          </pattern>
          <pattern id="major" width="316" height="316" x="238" y="7" patternUnits="userSpaceOnUse">
            <path d="M0 .5h316M.5 0v316" stroke="#242424" />
          </pattern>
        </defs>
        <rect width="100%" height="100%" fill="url(#minor)" />
        <rect width="100%" height="100%" fill="url(#mid)" />
        <rect width="100%" height="100%" fill="url(#major)" />
        <g fill="none">
          {links.map((d) => (
            <g key={d}>
              <path d={d} stroke="#1a1a1a" strokeWidth="3" />
              <path d={d} stroke="#9a9a9a" strokeWidth="1.200" />
            </g>
          ))}
          {activeLinks.map((d) => (
            <g key={d}>
              <path d={d} stroke="#1a1a1a" strokeWidth="3.500" />
              <path d={d} stroke="#e8e8e8" strokeWidth="1.600" />
            </g>
          ))}
        </g>
      </svg>

      <Node title="Render Layers" className="top-[395px] left-[40px] h-[169px] w-[88px]">
        <div className="pt-[3px]">
          <Output label="Image" color="yellow" />
          <Output label="Alpha" />
          <Output label="Depth" />
          <Output label="IndexOB" />
          <Output label="IndexMA" />
        </div>
        <div className="mt-auto flex flex-col gap-[4px] px-[7px] pb-[3px]">
          <div className={`flex h-[12px] divide-x divide-[#222] overflow-hidden rounded-[4px] border border-[#222] ${LIGHT}`}>
            <button type="button" aria-label="Browse scene" className={`flex w-[19px] items-center justify-between px-[2px] ${DARK}`}>
              <Icon name="scene" className="size-[10px]" />
              <UpDown small />
            </button>
            <input aria-label="Scene" defaultValue="Scene" className="w-0 flex-1 px-[4px] outline-none" />
            <button type="button" aria-label="Unlink scene" className="flex w-[11px] items-center justify-center">
              <Icon name="cross" className="size-[9px]" />
            </button>
          </div>
          <div className="flex h-[12px]">
            <Dropdown small label="Render layer" value="RenderLayer" className="flex-1 rounded-l-[4px]" />
            <button
              type="button"
              aria-label="Render this layer"
              className={`flex w-[12px] items-center justify-center rounded-r-[4px] border border-l-0 border-[#222] ${LIGHT}`}
            >
              <Icon name="newLayer" className="size-[10px]" />
            </button>
          </div>
        </div>
      </Node>

      <Node title="ID Mask" preview={false} header="bg-[#54545f]" className="top-[276px] left-[214px] w-[88px] pb-[3px]">
        <div className="pt-[3px]">
          <Output label="Alpha" />
        </div>
        <FieldGroup className="mx-[6px] mt-[3px] h-[12px] rounded-[6px]" rows={[{ label: 'Index:', value: '1', small: true }]} />
        <Row className="mt-[3px] h-[14px]">
          <Check small label="Anti-Aliasing" />
        </Row>
        <Input label="ID value" className="mt-px h-[14px]" />
      </Node>

      <Node title="Blur" selected header="bg-[#565263]" className="top-[315px] left-[296px] w-[89px] pb-[2px]">
        <div className="pt-[3px]">
          <Output label="Image" color="yellow" />
        </div>
        <Dropdown small label="Filter type" value="Fast Gaussian" className="mx-[7px] mt-[2px] h-[13px] rounded-[4px]" />
        <Row className="mt-px h-[14px]">
          <Check small label="Relative" />
        </Row>
        <FieldGroup
          className="mx-[7px] mt-[2px] h-[24px] rounded-[6px]"
          rows={[
            { label: 'X:', value: '0', small: true },
            { label: 'Y:', value: '0', small: true },
          ]}
        />
        <Row>
          <Check small label="Extend Bounds" />
        </Row>
        <Input label="Image" color="yellow" className="mt-[2px] h-[14px]" />
        <Row left="grey">
          <FieldGroup className="h-[13px] flex-1 rounded-[6px]" rows={[{ label: 'Size:', value: '1.000', small: true }]} />
        </Row>
      </Node>

      <Node title="Alpha Over" preview={false} header="bg-[#54545f]" className="top-[254px] left-[435px] w-[89px] pb-[2px]">
        <Output label="Image" color="yellow" className="mt-[2px] h-[14px]" />
        <Row className="mt-[2px] h-[13px]">
          <Check small label="Convert Premul" />
        </Row>
        <FieldGroup className="mx-[7px] mb-[3px] h-[13px] rounded-[6px]" rows={[{ label: 'Premul:', value: '0.000', fill: 0.09, small: true }]} />
        <Input label="Fac" />
        <Input label="Image" color="yellow" />
        <Input label="Image" color="yellow" />
      </Node>

      <Node title="Mix" header="bg-[#54545f]" className="top-[314px] left-[540px] w-[89px] pb-[3px]">
        <Output label="Image" color="yellow" className="mt-[3px] h-[14px]" />
        <div className="mx-[7px] mt-[2px] flex h-[13px]">
          <Dropdown small label="Blend type" value="Mix" className="flex-1 rounded-l-[4px]" />
          <button
            type="button"
            aria-label="Use alpha"
            className={`flex w-[12px] items-center justify-center rounded-r-[4px] border border-l-0 border-[#222] ${LIGHT}`}
          >
            <Icon name="useAlpha" className="size-[10px]" />
          </button>
        </div>
        <Row className="mt-px h-[14px]">
          <Check small label="Clamp" />
        </Row>
        <Row left="grey" className="mt-px h-[14px]">
          <FieldGroup className="h-[12px] flex-1 rounded-[6px]" rows={[{ label: 'Fac:', value: '0.600', fill: 0.61, small: true }]} />
        </Row>
        <Swatch label="Image" />
        <Swatch label="Image" />
      </Node>

      <Node title="Composite" className="top-[329px] left-[980px] w-[89px] pb-[3px]">
        <Row className="mt-[3px] h-[14px]">
          <Check small light checked label="Use Alpha" />
        </Row>
        <Swatch label="Image" black className="mt-[2px] h-[13px]" />
        <Row left="grey">
          <FieldGroup className="h-[12px] flex-1 rounded-[6px]" rows={[{ label: 'Alpha:', value: '1.000', small: true }]} />
        </Row>
        <Row left="grey">
          <FieldGroup className="h-[12px] flex-1 rounded-[6px]" rows={[{ label: 'Z:', value: '1.000', small: true }]} />
        </Row>
      </Node>

      <Node title="Viewer" className="top-[424px] left-[1324px] w-[88px] pb-[2px]">
        <Row className="mt-[3px] h-[14px]">
          <Check small light checked label="Use Alpha" />
        </Row>
        <Input label="Image" color="yellow" className="mt-px h-[14px]" />
        <Row left="grey">
          <FieldGroup className="h-[12px] flex-1 rounded-[6px]" rows={[{ label: 'Alpha:', value: '1.000', small: true }]} />
        </Row>
        <Row left="grey">
          <FieldGroup className="h-[12px] flex-1 rounded-[6px]" rows={[{ label: 'Z:', value: '1.000', small: true }]} />
        </Row>
      </Node>

      <p className="absolute bottom-[25px] left-[30px] text-white">Scene</p>

      {/* scroll bars and region tabs lie over the canvas */}
      <div className="absolute inset-x-0 bottom-0 h-[3px] bg-[#2f2f2f]" />
      <div className="absolute right-[22px] bottom-[5px] left-[5px] h-[11px] rounded-full bg-linear-to-b from-[#8e8e8e] to-[#757575]" />
      <div className="absolute inset-y-0 right-0 w-[4px] bg-[#2f2f2f]" />
      <div className="absolute top-[6px] right-[5px] bottom-[23px] w-[11px] rounded-full bg-linear-to-r from-[#757575] to-[#8e8e8e]" />
      <button type="button" aria-label="Open toolbar" className="absolute top-[22px] left-0 h-[14px] w-2 rounded-r-[3px] bg-[#2a2a2a] text-[10px] leading-[14px] text-[#8a8a8a]">
        +
      </button>
      <button type="button" aria-label="Open sidebar" className="absolute top-[22px] right-0 h-[14px] w-[14px] rounded-l-[3px] bg-[#5a5a5a] text-[10px] leading-[14px] text-[#a0a0a0]">
        +
      </button>
      <Grip className="top-0 right-0" />
    </div>
  );
}

function NodeHeader() {
  return (
    <div className="relative flex h-[27px] shrink-0 items-center border-b border-black bg-[#727272] pt-[2px] pl-2">
      <EditorType icon="nodes" label="Editor type: Node editor" />
      <Menus items={['View', 'Select', 'Add', 'Node']} />
      <IconGroup icons={['layers', 'texture', 'material']} active="layers" />
      <div className="ml-[5px] flex gap-[15px]">
        <Check light checked label="Use Nodes" />
        <Check light checked label="Backdrop" />
      </div>
      <div className="ml-[14px]">
        <IconGroup icons={['colorAlpha', 'texture', 'alpha', 'red', 'green', 'blue']} active="colorAlpha" />
      </div>
      <div className="ml-[5px] w-[100px]">
        <Check label="Auto Render" />
      </div>
      <IconGroup tone="light" icons={['pin']} />
      <button type="button" aria-label="Parent node tree" className="ml-[4px] flex h-5 w-5 items-center justify-center rounded-[5px] border border-[#5e5e5e] bg-[#828282]">
        <Icon name="up" />
      </button>
      <div className="ml-4">
        <IconGroup icons={['backdrop']} />
      </div>
      <div className="ml-[4px] flex h-5 w-[52px] divide-x divide-[#222] overflow-hidden rounded-[5px] border border-[#3a3a3a]">
        <button type="button" aria-label="Snap" className="flex w-[19px] items-center justify-center bg-[#8a8a8a]">
          <Icon name="magnet" className="size-[15px]" />
        </button>
        <button type="button" aria-label="Snap element" className={`flex flex-1 items-center justify-between px-[3px] ${DARK}`}>
          <Icon name="grid" />
          <UpDown />
        </button>
      </div>
      <div className="ml-[5px]">
        <IconGroup tone="light" icons={['copy', 'paste']} />
      </div>
      <GripLow />
    </div>
  );
}

/* ---------- timeline ---------- */

const FRAMES = Array.from({ length: 25 }, (_, i) => -120 + i * 20);

function Timeline() {
  // 20 frames take 60.5 units, frame 0 stands at 381
  const x = (frame: number) => 381 + frame * 3.025;
  return (
    <>
      <div className="relative h-[48px] shrink-0 bg-[#434343]">
        <svg className="absolute inset-0 size-full" aria-hidden="true">
          <rect x={x(1)} width={x(300) - x(1)} height="48" fill="#727272" />
          {FRAMES.map((f) => (
            <g key={f}>
              <path d={`M${Math.round(x(f)) + 0.5} 0v48`} stroke="#000" strokeOpacity=".25" />
              <path d={`M${Math.round(x(f + 10)) + 0.5} 0v48`} stroke="#000" strokeOpacity=".08" />
            </g>
          ))}
          <rect x={x(0) - 1} width="4" height="48" fill="#2c2c2c" />
          <rect x={x(184)} width="3" height="48" fill="#6fbb4c" />
        </svg>
        <Grip className="top-0 right-0" />
      </div>
      <div className="h-[18px] shrink-0 bg-[#6c6c6c] pt-px">
        <div className="mx-[5px] h-[14px] overflow-hidden rounded-[5px] border border-[#4a4a4a] bg-linear-to-b from-[#8c8c8c] to-[#757575]">
          <ol className={`-ml-[14px] flex text-[10px] leading-[14px] text-[#101010] ${WIDE}`}>
            {FRAMES.map((f) => (
              <li key={f} className="w-[60px] shrink-0 text-center">
                {f}
              </li>
            ))}
          </ol>
        </div>
      </div>
      <div className="relative flex h-[26px] shrink-0 items-center border-t border-[#5a5a5a] bg-[#686868] pl-[9px]">
        <EditorType icon="clock" label="Editor type: Timeline" />
        <Menus items={['View', 'Marker', 'Frame', 'Playback']} />
        <IconGroup tone="light" icons={['clockPie', 'lock']} />
        <div className="ml-[6px] flex h-5 w-[228px] divide-x divide-[#222] overflow-hidden rounded-[10px] border border-[#3c3c3c]">
          <Field label="Start:" value="1" />
          <Field label="End:" value="300" />
        </div>
        <FieldGroup className="ml-[5px] h-5 w-[90px] rounded-[10px]" rows={[{ value: '184' }]} />
        <div className="ml-4">
          <IconGroup tone="light" icons={['first', 'prev', 'back', 'play', 'next', 'last']} />
        </div>
        <Dropdown label="Sync mode" value="No Sync" className="ml-[6px] h-5 w-[116px] rounded-[5px]" />
        <div className="ml-[15px]">
          <IconGroup tone="light" icons={['record']} />
        </div>
        <div className="ml-[4px]">
          <EditorType icon="diamond" label="Keyframe type" />
        </div>
        <div className={`ml-[5px] flex h-5 w-[171px] divide-x divide-[#222] overflow-hidden rounded-[5px] border border-[#2a2a2a] ${LIGHT}`}>
          <label className="flex flex-1 items-center pl-[3px]">
            <Icon name="keying" />
            <input aria-label="Keying set" className="w-0 flex-1 outline-none" />
          </label>
          <button type="button" aria-label="Insert keyframe" className="flex w-5 items-center justify-center">
            <Icon name="key" />
          </button>
          <button type="button" aria-label="Delete keyframe" className="flex w-5 items-center justify-center">
            <Icon name="keyDel" />
          </button>
        </div>
        <GripLow />
      </div>
    </>
  );
}

/* ---------- outliner ---------- */

type TreeItem = { name: string; icon: string; expand?: boolean; extras?: string[]; toggles?: boolean };

const TREE: TreeItem[] = [
  { name: 'World', icon: 'world' },
  { name: 'Area', icon: 'lamp', expand: true, extras: ['lampData'], toggles: true },
  { name: 'Area.001', icon: 'lamp', expand: true, extras: ['lampData'], toggles: true },
  { name: 'Camera', icon: 'camera', expand: true, extras: ['cameraData'], toggles: true },
  { name: 'Cube', icon: 'mesh', expand: true, extras: ['meshData', 'wrench'], toggles: true },
  { name: 'Empty', icon: 'empty', toggles: true },
  { name: 'Mesh', icon: 'mesh', expand: true, extras: ['meshData'], toggles: true },
];

function Outliner() {
  return (
    <section className="relative flex h-[170px] shrink-0 flex-col border-b border-black bg-[#727272]">
      <div className="flex h-[27px] shrink-0 items-center overflow-hidden border-b border-[#8a8a8a] bg-[#686868] pl-[9px]">
        <EditorType icon="outliner" label="Editor type: Outliner" />
        <Menus items={['View', 'Search']} />
        <Dropdown label="Display mode" value="All Scenes" className="ml-[2px] h-5 w-[119px] shrink-0 rounded-[5px]" />
        <label className={`ml-[5px] flex h-5 flex-1 items-center rounded-l-[5px] border border-r-0 border-[#2a2a2a] pl-[3px] ${LIGHT}`}>
          <Icon name="search" />
          <input type="search" aria-label="Filter" className="w-0 flex-1 outline-none" />
        </label>
      </div>
      <div className="flex min-h-0 flex-1 pr-[4px]">
        <ul className="relative flex-1 overflow-hidden pt-[2px]">
          <span className="absolute inset-y-0 left-[30px] w-px bg-[#4c4c4c]" />
          {TREE.map((item) => (
            <li key={item.name} className="flex h-5 items-center pl-[25px] odd:bg-[#6c6c6c]">
              <span className="relative flex w-[18px] items-center">
                {item.expand && (
                  <svg viewBox="0 0 10 10" className="size-[10px] shrink-0" aria-hidden="true">
                    <circle cx="5" cy="5" r="4.300" fill="#fff" stroke="#222" />
                    <path d="M2.500 5h5M5 2.500v5" stroke="#111" strokeWidth="1.300" />
                  </svg>
                )}
                {item.toggles && <span className={`h-px flex-1 bg-[#4c4c4c] ${item.expand ? '' : 'ml-[5px]'}`} />}
              </span>
              <span className={item.name === 'World' ? 'rounded-full bg-[#a9b4c0]' : ''}>
                <Icon name={item.icon} />
              </span>
              <span className="pt-px pl-[4px]">{item.name}</span>
              {item.extras && (
                <span className="flex items-center gap-[5px] pl-[10px]">
                  <span className="mr-[5px] h-[10px] w-px bg-[#3c3c3c]" />
                  {item.extras.map((e) => (
                    <Icon key={e} name={e} />
                  ))}
                </span>
              )}
              <span className="ml-auto flex h-full">
                {['eye', 'cursor', 'still'].map((icon) => (
                  <button
                    key={icon}
                    type="button"
                    aria-label={`${item.name} ${icon}`}
                    className="flex h-full w-5 items-center justify-center border-l border-[#505050]"
                  >
                    {item.toggles && <Icon name={icon} className="size-[15px]" />}
                  </button>
                ))}
              </span>
            </li>
          ))}
        </ul>
        <div className="mt-[4px] mb-[4px] w-[13px] rounded-full bg-[#545454] pt-[16px]">
          <div className="h-[51px] rounded-full border border-[#4a4a4a] bg-linear-to-r from-[#7c7c7c] to-[#969696]" />
        </div>
      </div>
      <Grip className="top-0 right-0" />
      <GripLow />
    </section>
  );
}

/* ---------- properties ---------- */

const GROUP1 = 'h-5 rounded-[10px]';
const GROUP2 = 'h-10 rounded-[10px]';
const GROUP3 = 'h-15 rounded-[10px]';

function PanelTitle({ title, className }: { title: string; className: string }) {
  return (
    <div className={`-mx-1 border-t border-[#3c3c3c] ${className}`}>
      <h2 className="flex h-[26px] items-center gap-[4px] border-t border-[#808080] px-2 text-[12px]">
        <svg viewBox="0 0 8 8" className="size-2" aria-hidden="true">
          <path d="M0 0h8L4 8z" fill="#222" />
        </svg>
        <span className="flex-1">{title}</span>
        <svg viewBox="0 0 12 6" className="h-1.5 w-3" aria-hidden="true">
          <path d="M0 1.500h12M0 4.500h12" stroke="#d0d0d0" strokeDasharray="1 2" />
        </svg>
      </h2>
    </div>
  );
}

function Properties() {
  return (
    <section className="relative flex min-h-0 flex-1 flex-col bg-[#727272]">
      <div className="flex h-[27px] shrink-0 items-center border-b border-[#8a8a8a] bg-[#686868] pl-[9px]">
        <EditorType icon="props" label="Editor type: Properties" />
        <div className="ml-2">
          <IconGroup
            icons={['still', 'layers', 'scene', 'world', 'cube', 'chain', 'wrench', 'meshData', 'material', 'texture', 'particles', 'physics']}
            active="particles"
          />
        </div>
      </div>
      <div className="flex min-h-0 flex-1 gap-[4px] pr-[4px] pl-[4px]">
        <div className="-mt-[10px] min-w-0 flex-1 px-1 [clip-path:inset(10px_0_0_0)]">
          <div className="grid grid-cols-2 gap-2">
            <div className="flex flex-col gap-[2px]">
              <FieldGroup className={GROUP1} rows={[{ label: 'Degrees:', value: '5', dim: true }]} />
              <FieldGroup className={GROUP1} rows={[{ label: 'Pixel:', value: '3', dim: true }]} />
              <Check label="B-Spline" />
              <FieldGroup className={GROUP1} rows={[{ label: 'Steps:', value: '3' }]} />
            </div>
            <div className="flex flex-col gap-[2px]">
              <FieldGroup className={GROUP1} rows={[{ label: 'Start:', value: '0.000', fill: 0.06 }]} />
              <FieldGroup className={GROUP1} rows={[{ label: 'End:', value: '1.000', fill: 1 }]} />
              <FieldGroup className={GROUP1} rows={[{ label: 'Random:', value: '0.189', fill: 0.23 }]} />
            </div>
          </div>

          <PanelTitle title="Display" className="mt-[11px] mb-[7px]" />
          <div className="flex gap-2">
            <Choice items={['None', 'Rendered', 'Path']} active="Rendered" className="w-[253px]" />
            <Check label="Guide Ha..." />
          </div>
          <div className="mt-[5px] grid grid-cols-2 gap-x-2">
            <FieldGroup className={GROUP1} rows={[{ label: 'Display:', value: '100%', fill: 1 }]} />
            <span />
            <div className="mt-[6px] flex flex-col gap-[2px]">
              <Check label="Size" />
              <Check label="Velocity" />
              <Check label="Number" />
            </div>
            <div className="mt-[5px]">
              <p className="h-5 pl-[7px] leading-[22px]">Color:</p>
              <Dropdown label="Color" value="Material" className="h-[21px] rounded-t-[4px]" />
              <FieldGroup
                className="h-10 rounded-b-[10px] border-t-0"
                rows={[
                  { label: 'Max:', value: '1.000', dim: true },
                  { label: 'Steps:', value: '4' },
                ]}
              />
            </div>
          </div>

          <PanelTitle title="Children" className="mt-[5px] mb-[7px]" />
          <Choice items={['None', 'Simple', 'Interpolated']} active="Interpolated" className="" />
          <div className="mt-[5px] grid grid-cols-2 gap-2">
            <div className="flex flex-col gap-[2px]">
              <FieldGroup
                className={GROUP2}
                rows={[
                  { label: 'Display:', value: '50' },
                  { label: 'Render:', value: '800' },
                ]}
              />
              <p className="mt-[28px] h-5 pl-[7px] leading-[22px]">Effects:</p>
              <div>
                <Check label="Use Clump Curve" />
                <FieldGroup
                  className={GROUP2}
                  rows={[
                    { label: 'Clump:', value: '0.000', fill: 0.52 },
                    { label: 'Shape:', value: '0.000', fill: 0.52 },
                  ]}
                />
              </div>
              <div>
                <Check label="Use Clump Noise" />
                <FieldGroup className={GROUP1} rows={[{ label: 'Clump Noise Size:', value: '0.100', dim: true }]} />
              </div>
              <FieldGroup
                className={GROUP2}
                rows={[
                  { label: 'Length:', value: '0.283', fill: 0.32 },
                  { label: 'Threshold:', value: '0.000', fill: 0.06 },
                ]}
              />
              <FieldGroup
                className={GROUP3}
                rows={[
                  { label: 'Parting:', value: '0.000', fill: 0.06 },
                  { label: 'Min:', value: '0.000' },
                  { label: 'Max:', value: '0.000' },
                ]}
              />
            </div>
            <div className="flex flex-col gap-[2px]">
              <FieldGroup className={GROUP1} rows={[{ label: 'Seed:', value: '0' }]} />
              <FieldGroup className={GROUP1} rows={[{ label: 'Virtual Parents:', value: '0.000', fill: 0.06 }]} />
              <Check label="Long Hair" />
              <div className="mt-[3px]">
                <Check label="Use Roughness Curve" />
              </div>
              <p className="h-5 pl-[7px] leading-[22px]">Roughness:</p>
              <FieldGroup
                className={GROUP2}
                rows={[
                  { label: 'Uniform:', value: '0.000' },
                  { label: 'Size:', value: '1.000' },
                ]}
              />
              <FieldGroup
                className={GROUP2}
                rows={[
                  { label: 'Endpoint:', value: '0.006' },
                  { label: 'Shape:', value: '1.000' },
                ]}
              />
              <FieldGroup
                className={GROUP3}
                rows={[
                  { label: 'Random:', value: '0.006' },
                  { label: 'Size:', value: '0.685' },
                  { label: 'Threshold:', value: '0.000', fill: 0.06 },
                ]}
              />
            </div>
          </div>
          <p className="mt-[5px] h-5 pl-[7px] leading-[22px]">Kink:</p>
          <Choice items={['Nothing', 'Curl', 'Radial', 'Wave', 'Braid', 'Spiral']} active="Braid" className="mt-[4px]" />
          <div className="mt-[5px] grid grid-cols-2 gap-x-2 gap-y-[2px]">
            <FieldGroup
              className={GROUP2}
              rows={[
                { label: 'Amplitude:', value: '0.202' },
                { label: 'Clump:', value: '1.000', fill: 1 },
              ]}
            />
            <FieldGroup
              className={GROUP2}
              rows={[
                { label: 'Frequency:', value: '0.343' },
                { label: 'Shape:', value: '0.000', fill: 0.52 },
              ]}
            />
            <FieldGroup className={GROUP1} rows={[{ label: 'Flatness:', value: '0.000', fill: 0.06 }]} />
          </div>

          <PanelTitle title="Field Weights" className="mt-[6px] mb-[4px]" />
          <label className={`ml-auto flex h-5 w-[227px] rounded-[5px] border border-[#2a2a2a] pl-[6px] ${LIGHT}`}>
            <Icon name="box" />
            <input aria-label="Group" className="w-0 flex-1 outline-none" />
          </label>
        </div>
        <div className="my-[3px] w-[13px] rounded-full bg-[#545454] pt-[269px]">
          <div className="h-[240px] rounded-full border border-[#4a4a4a] bg-linear-to-r from-[#7c7c7c] to-[#969696]" />
        </div>
      </div>
      <Grip className="top-0 right-0" />
      <GripLow />
    </section>
  );
}

/* ---------- taskbar ---------- */

function Office({ letter, dark, light, children }: { letter: string; dark: string; light: string; children: ReactNode }) {
  return (
    <svg viewBox="0 0 30 30" className="size-[30px]" aria-hidden="true">
      <rect x="16" y="4" width="13" height="22" fill="#fff" stroke={light} strokeWidth=".8" />
      {children}
      <path d="M0 3.500L18 0v30L0 26.500z" fill={dark} />
      <text x="8.500" y="20" fontSize="14" fontWeight="bold" textAnchor="middle" fill="#fff" fontFamily="Open Sans, sans-serif">
        {letter}
      </text>
    </svg>
  );
}

const TASKS: { name: string; state?: 'open' | 'active'; icon: ReactNode }[] = [
  {
    name: 'Store',
    icon: (
      <svg viewBox="0 0 30 30" className="size-[30px]" aria-hidden="true">
        <rect width="30" height="30" fill="#128a1c" />
        <path d="M11 10V7a4 4 0 0 1 8 0v3" fill="none" stroke="#fff" strokeWidth="1.500" />
        <path d="M4 10l22-2v18L6 25z" fill="#fff" />
        <path d="M9 13.500l5-.5v4H9zM15 13l6-.6V17h-6zM9 18h5v4l-5-.5zM15 18h6v5l-6-.8z" fill="#128a1c" />
      </svg>
    ),
  },
  {
    name: 'File Explorer',
    state: 'open',
    icon: (
      <svg viewBox="0 0 32 32" className="size-8" aria-hidden="true">
        <path d="M1 3h8l2 2h19v23H1z" fill="#f0d77e" stroke="#caa84a" strokeWidth=".7" />
        <path d="M4 4h5v3H4zM18 4h5v3h-5z" fill="#5fa763" />
        <path d="M12 5h5v3h-5z" fill="#c55" />
        <path d="M1 10h30l-1 17H2z" fill="#f8e9a6" />
        <path d="M5 31V19l3-3h16l3 3v12h-5v-8H10v8z" fill="#8fcbe8" stroke="#4a94b8" strokeWidth=".8" />
      </svg>
    ),
  },
  {
    name: 'Firefox',
    icon: (
      <svg viewBox="0 0 30 30" className="size-[31px]" aria-hidden="true">
        <circle cx="15" cy="16" r="13" fill="#e8541c" />
        <path d="M15 29A13 13 0 0 0 28 16c0-6-3-9-6-13-2-3-3-3-3-3s-2 4 1 8c3 5 1 12-5 13z" fill="#fbb829" />
        <circle cx="15" cy="14" r="8.500" fill="#25509c" />
        <path d="M2 12C2 7 4 5 4 5s1 2 3 2c3-1 5 0 6 2l4 1c0 3-4 3-4 5 2 3 5 3 8 0 1 6-4 9-9 8-6-1-8-5-10-11z" fill="#f07c1e" />
        <path d="M22 14c1-4-1-7-3-9 5 2 8 8 6 14-1 4-5 7-9 7 5-3 6-7 6-12z" fill="#ffd94a" />
      </svg>
    ),
  },
  {
    name: 'Steam',
    icon: (
      <span className="flex size-[30px] items-center justify-center rounded-full bg-linear-to-b from-[#13203f] to-[#1f6aa5]">
        <FaSteamSymbol className="size-[26px] text-white" />
      </span>
    ),
  },
  {
    name: 'Half-Life 2',
    icon: (
      <svg viewBox="0 0 32 32" className="size-8" aria-hidden="true">
        <circle cx="14" cy="16" r="14" fill="#44402c" />
        <path d="M18 2h13v13l-6 4z" fill="#44402c" />
        <circle cx="14" cy="16" r="11.500" fill="#f3972a" />
        <path d="M8 10h4l6.500 13H22M13 14L8 23" fill="none" stroke="#2b2617" strokeWidth="2.400" />
        <text x="26" y="11" fontSize="10" fontWeight="bold" textAnchor="middle" fill="#f3972a" fontFamily="Open Sans, sans-serif">
          2
        </text>
      </svg>
    ),
  },
  {
    name: 'Internet Explorer',
    icon: (
      <svg viewBox="0 0 32 32" className="size-8" aria-hidden="true">
        <path d="M26 21.500a10 10 0 1 1 .8-6" fill="none" stroke="#2f9fdc" strokeWidth="5.500" />
        <path d="M9 17.500h20.500c0-2 0-3-.6-4.500H9z" fill="#6fcdf5" />
        <path d="M29 8c2-5-1-7-6-5C14 7 4 18 2 25c-1 5 3 6 8 3" fill="none" stroke="#f3c93a" strokeWidth="2.200" />
      </svg>
    ),
  },
  {
    name: 'Chrome',
    state: 'open',
    icon: (
      <svg viewBox="0 0 30 30" className="size-[30px]" aria-hidden="true">
        <circle cx="15" cy="15" r="15" fill="#dd4b3e" />
        <path d="M15 15L28 7.500A15 15 0 0 1 14 30z" fill="#fcd04b" />
        <path d="M15 15L14 30A15 15 0 0 1 2 7.500z" fill="#35a353" />
        <path d="M2 7.500L9 17l6-2V8h13A15 15 0 0 0 2 7.500z" fill="#dd4b3e" />
        <circle cx="15" cy="15" r="7" fill="#fff" />
        <circle cx="15" cy="15" r="5.500" fill="#4a86ee" />
      </svg>
    ),
  },
  {
    name: 'Chromium',
    icon: (
      <svg viewBox="0 0 30 30" className="size-[30px]" aria-hidden="true">
        <circle cx="15" cy="15" r="15" fill="#7fa8ec" />
        <path d="M15 15L14 30A15 15 0 0 1 2 7.500z" fill="#5f8fe6" />
        <path d="M2 7.500L9 17l6-2V8h13A15 15 0 0 0 2 7.500z" fill="#3f72cf" />
        <circle cx="15" cy="15" r="7" fill="#e8f0fd" />
        <circle cx="15" cy="15" r="5.500" fill="#4f86e2" />
      </svg>
    ),
  },
  {
    name: 'Excel',
    icon: (
      <Office letter="X" dark="#1f7244" light="#1f7244">
        <path d="M18 8h10M18 12h10M18 16h10M18 20h10M18 24h10M23 5v20" stroke="#1f7244" />
      </Office>
    ),
  },
  {
    name: 'OneNote',
    icon: (
      <Office letter="N" dark="#80397b" light="#80397b">
        <path d="M19 8h7M19 11h7M19 14h7M19 17h7M19 20h7M19 23h7M27 5v20" stroke="#80397b" strokeWidth="1.200" />
      </Office>
    ),
  },
  {
    name: 'Outlook',
    icon: (
      <svg viewBox="0 0 30 30" className="size-[30px]" aria-hidden="true">
        <rect x="16" y="8" width="14" height="14" fill="#fff" />
        <path d="M17 10l5 6 8-8" fill="none" stroke="#0f74c8" strokeWidth="2" />
        <path d="M0 3.500L18 0v30L0 26.500z" fill="#0f74c8" />
        <text x="8.500" y="20" fontSize="14" fontWeight="bold" textAnchor="middle" fill="#fff" fontFamily="Open Sans, sans-serif">
          O
        </text>
      </svg>
    ),
  },
  {
    name: 'PowerPoint',
    icon: (
      <Office letter="P" dark="#d04727" light="#d04727">
        <circle cx="23" cy="11" r="4" fill="#d04727" />
        <path d="M19 18h8M19 21h8" stroke="#d04727" strokeWidth="1.500" />
      </Office>
    ),
  },
  {
    name: 'Word',
    icon: (
      <Office letter="W" dark="#2b579a" light="#2b579a">
        <path d="M19 8h9M19 11h9M19 14h9M19 17h9M19 20h9M19 23h9" stroke="#2b579a" strokeWidth="1.200" />
      </Office>
    ),
  },
  { name: 'Blender', state: 'active', icon: <BlenderLogo className="size-8" /> },
];

/* cx, cy, rx, ry, angle */
const BLOBS = [
  [60, 8, 26, 8, 30],
  [150, 34, 18, 6, -20],
  [255, 12, 30, 7, 40],
  [350, 30, 16, 8, 0],
  [430, 4, 24, 7, -10],
  [545, 10, 20, 9, 20],
  [640, 32, 14, 5, -30],
  [690, 6, 16, 7, 60],
  [955, 12, 22, 5, -30],
  [1010, 28, 18, 6, 20],
  [1062, 16, 14, 6, 80],
  [1120, 30, 16, 5, 10],
  [1190, 10, 12, 5, -50],
  [1275, 26, 22, 7, 30],
  [1340, 8, 10, 4, 0],
  [1420, 22, 18, 6, -20],
  [1500, 30, 14, 5, 20],
  [1588, 18, 18, 7, 60],
  [1662, 12, 12, 9, 10],
  [1735, 22, 20, 8, -40],
  [1700, 34, 12, 5, 0],
  [1870, 6, 20, 5, 0],
];

function Taskbar() {
  return (
    <footer className="relative flex h-10 shrink-0 items-stretch overflow-hidden bg-linear-to-r from-[#33786f] via-[#43968c] to-[#2f7f77] font-['Noto_Sans','Open_Sans',sans-serif]">
      <svg className="absolute inset-0 size-full blur-[2px]" aria-hidden="true">
        <path d="M0 0h140l60 40H60zM300 0h120l40 14H330zM560 0h160l-60 20H540z" fill="#24595a" opacity=".5" />
        {BLOBS.map(([cx, cy, rx, ry, a]) => (
          <ellipse key={cx} cx={cx} cy={cy} rx={rx} ry={ry} transform={`rotate(${a} ${cx} ${cy})`} fill="#93b3b5" opacity=".4" />
        ))}
      </svg>
      <button type="button" aria-label="Start" className="relative flex w-[50px] items-center justify-center">
        <svg viewBox="0 0 26 26" className="size-[26px]" aria-hidden="true">
          <path d="M0 4l11-1.600V12.500H0zM12.200 2.200L26 0v12.500H12.200zM0 13.500h11v10.100L0 22zM12.200 13.500H26V26l-13.800-2.200z" fill="#fff" />
        </svg>
      </button>
      {TASKS.map((task) => (
        <button
          key={task.name}
          type="button"
          aria-label={task.name}
          className={`relative mx-[2px] my-px flex w-[58px] items-center justify-center ${
            task.state === 'active' ? 'border border-white/90 bg-white/55' : task.state === 'open' ? 'border border-white/50 bg-white/25' : ''
          }`}
        >
          {task.icon}
        </button>
      ))}
      <div className="relative ml-auto flex items-center gap-[8px] pr-[14px]">
        <svg viewBox="0 0 8 4" className="mr-[8px] h-1 w-2" aria-hidden="true">
          <path d="M4 0l4 4H0z" fill="#fff" />
        </svg>
        <svg viewBox="0 0 16 16" className="size-4" aria-hidden="true">
          <path d="M4 5h3l5-4v14l-5-4H4z" fill="#fff" />
          <path d="M6.500 5v6" stroke="#2f6f68" />
        </svg>
        <svg viewBox="0 0 16 16" className="size-4" aria-hidden="true">
          <rect x="4.500" y="3.500" width="11" height="8" fill="none" stroke="#fff" strokeWidth="1.300" />
          <path d="M6 14.500h8M10 12v2" stroke="#fff" strokeWidth="1.300" />
          <path d="M1 1h4v4H1zM3 5v6" fill="#2f6f68" stroke="#fff" strokeWidth="1.200" />
        </svg>
        <svg viewBox="0 0 16 16" className="size-4" aria-hidden="true">
          <path d="M1.500 1v14" stroke="#fff" strokeWidth="1.500" />
          <path d="M3 2c4-1 5 2 11 1v7c-5 1-6-2-11-1z" fill="#fff" />
          <circle cx="11" cy="11" r="4.500" fill="#d0493c" />
          <path d="M9 9l4 4M13 9l-4 4" stroke="#fff" strokeWidth="1.200" />
        </svg>
        <time className="pl-[7px] text-center text-[11px] leading-[17px] text-white">
          <span className="block">7:22 PM</span>
          <span className="block">10/18/2018</span>
        </time>
      </div>
    </footer>
  );
}

export default function App() {
  return (
    <div className={`flex h-screen flex-col overflow-hidden text-[11px] leading-4 text-black ${CONDENSED}`}>
      <div className="flex min-h-0 flex-1 flex-col bg-[#60bab3]">
        <TitleBar />
        <div className="mx-2 mb-2 flex min-h-0 flex-1 flex-col">
          <InfoHeader />
          <div className="flex min-h-0 flex-1">
            <main className="flex min-w-0 flex-1 flex-col border-r border-black">
              <NodeCanvas />
              <NodeHeader />
              <Timeline />
            </main>
            <aside className="flex w-[379px] shrink-0 flex-col overflow-hidden">
              <Outliner />
              <Properties />
            </aside>
          </div>
        </div>
      </div>
      <Taskbar />
    </div>
  );
}
